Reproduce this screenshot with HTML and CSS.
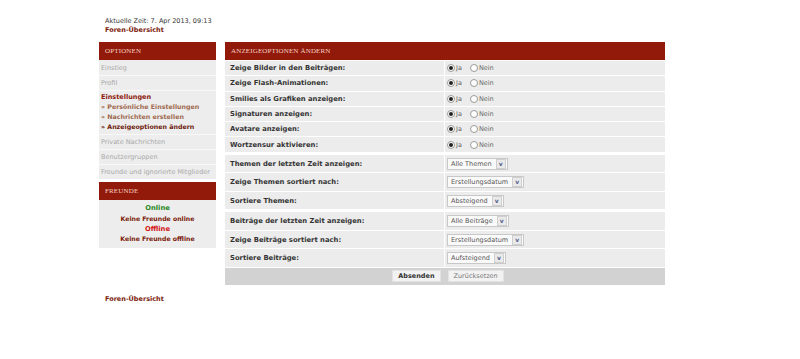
FILE: index.html
```html
<!DOCTYPE html>
<html lang="de">
<head>
<meta charset="utf-8">
<title>Anzeigeoptionen ändern</title>
<link rel="stylesheet" href="styles.css">
</head>
<body>
<div class="page">
  <div class="topinfo">
    <div class="time">Aktuelle Zeit: 7. Apr 2013, 09:13</div>
    <a class="crumb" href="#">Foren-Übersicht</a>
  </div>

  <div class="layout">
    <aside class="sidebar">
      <div class="panel">
        <div class="phead">Optionen</div>
        <ul class="menu">
          <li><a class="off" href="#">Einstieg</a></li>
          <li><a class="off" href="#">Profil</a></li>
          <li class="group">
            <a class="cur" href="#">Einstellungen</a>
            <a class="sub" href="#">» Persönliche Einstellungen</a>
            <a class="sub" href="#">» Nachrichten erstellen</a>
            <a class="sub act" href="#">» Anzeigeoptionen ändern</a>
          </li>
          <li><a class="off" href="#">Private Nachrichten</a></li>
          <li><a class="off" href="#">Benutzergruppen</a></li>
          <li><a class="off" href="#">Freunde und ignorierte Mitglieder</a></li>
        </ul>
      </div>
      <div class="panel friends">
        <div class="phead">Freunde</div>
        <div class="fbody">
          <div class="on">Online</div>
          <div class="none">Keine Freunde online</div>
          <div class="offl">Offline</div>
          <div class="none">Keine Freunde offline</div>
        </div>
      </div>
    </aside>

    <main class="main">
      <div class="phead">Anzeigeoptionen ändern</div>
      <form class="opts">
        <div class="grp">
          <div class="row"><span class="lab">Zeige Bilder in den Beiträgen:</span><span class="val"><label><input type="radio" name="a" checked>Ja</label><label><input type="radio" name="a">Nein</label></span></div>
          <div class="row"><span class="lab">Zeige Flash-Animationen:</span><span class="val"><label><input type="radio" name="b" checked>Ja</label><label><input type="radio" name="b">Nein</label></span></div>
          <div class="row"><span class="lab">Smilies als Grafiken anzeigen:</span><span class="val"><label><input type="radio" name="c" checked>Ja</label><label><input type="radio" name="c">Nein</label></span></div>
          <div class="row"><span class="lab">Signaturen anzeigen:</span><span class="val"><label><input type="radio" name="d" checked>Ja</label><label><input type="radio" name="d">Nein</label></span></div>
          <div class="row"><span class="lab">Avatare anzeigen:</span><span class="val"><label><input type="radio" name="e" checked>Ja</label><label><input type="radio" name="e">Nein</label></span></div>
          <div class="row"><span class="lab">Wortzensur aktivieren:</span><span class="val"><label><input type="radio" name="f" checked>Ja</label><label><input type="radio" name="f">Nein</label></span></div>
        </div>
        <div class="grp sel">
          <div class="row"><span class="lab">Themen der letzten Zeit anzeigen:</span><span class="val"><span class="select"><span class="stext">Alle Themen</span><span class="arrow">v</span></span></span></div>
          <div class="row"><span class="lab">Zeige Themen sortiert nach:</span><span class="val"><span class="select"><span class="stext">Erstellungsdatum</span><span class="arrow">v</span></span></span></div>
          <div class="row"><span class="lab">Sortiere Themen:</span><span class="val"><span class="select"><span class="stext">Absteigend</span><span class="arrow">v</span></span></span></div>
        </div>
        <div class="grp sel">
          <div class="row"><span class="lab">Beiträge der letzten Zeit anzeigen:</span><span class="val"><span class="select"><span class="stext">Alle Beiträge</span><span class="arrow">v</span></span></span></div>
          <div class="row"><span class="lab">Zeige Beiträge sortiert nach:</span><span class="val"><span class="select"><span class="stext">Erstellungsdatum</span><span class="arrow">v</span></span></span></div>
          <div class="row"><span class="lab">Sortiere Beiträge:</span><span class="val"><span class="select"><span class="stext">Aufsteigend</span><span class="arrow">v</span></span></span></div>
        </div>
        <div class="buttons">
          <button type="button" class="btn primary">Absenden</button>
          <button type="button" class="btn">Zurücksetzen</button>
        </div>
      </form>
    </main>
  </div>

  <div class="footer">
    <a class="crumb" href="#">Foren-Übersicht</a>
  </div>
</div>
</body>
</html>
```

FILE: styles.css
```css
* { box-sizing: border-box; }
html, body { margin: 0; padding: 0; background: #fff; }
body {
  font-family: "DejaVu Sans", Verdana, sans-serif;
  font-size: 6.5px;
  color: #333;
}
a { text-decoration: none; }

.page {
  width: 566px;
  margin-left: 99px;
  padding-top: 17px;
}

.topinfo {
  padding-left: 6px;
  line-height: 9px;
  color: #333;
}
.crumb {
  color: #7a1a0a;
  font-weight: bold;
  display: block;
}

.layout {
  display: flex;
  gap: 9px;
  margin-top: 7px;
  align-items: flex-start;
}

.sidebar {
  width: 117px;
  display: flex;
  flex-direction: column;
  gap: 3px;
}

.panel { background: #ededed; }

.phead {
  background: #921a0b;
  color: #f6cfc0;
  font-family: "Liberation Serif", "Times New Roman", serif;
  font-size: 7px;
  text-transform: uppercase;
  height: 18px;
  line-height: 18px;
  padding-left: 6px;
  letter-spacing: 0.15px;
}

.menu {
  list-style: none;
  margin: 0;
  padding: 0;
  padding-top: 1px;
}
.menu li {
  border-top: 1px solid #f8f8f8;
  padding: 0 2px;
  line-height: 14px;
  white-space: nowrap;
}
.menu li:first-child { border-top: none; }
.menu a { display: block; }
.menu .off { color: #a8a8a8; }
.menu .group { padding-top: 1px; padding-bottom: 2px; line-height: 10px; }
.menu .cur { color: #8c1a0c; font-weight: bold; }
.menu .sub { color: #a06a50; font-weight: bold; font-size: 6.3px; }
.menu .act { color: #6e1a0c; }

.fbody {
  text-align: center;
  font-weight: bold;
  padding: 3px 0 4px;
  line-height: 10.5px;
}
.fbody .on { color: #2c8a1e; font-size: 6.8px; }
.fbody .offl { color: #d41616; font-size: 6.8px; }
.fbody .none { color: #7a1a0a; line-height: 10px; font-size: 6.2px; }

.main {
  width: 440px;
}

.opts {
  display: flex;
  flex-direction: column;
  gap: 3px;
  padding-top: 1px;
}
.grp {
  display: flex;
  flex-direction: column;
  gap: 1px;
}
.row {
  display: flex;
  gap: 1px;
  height: 14.3px;
}
.grp.sel .row { height: 17.5px; }
.lab {
  width: 219px;
  background: #ececec;
  font-weight: bold;
  font-size: 6.8px;
  color: #353535;
  padding-left: 5px;
  display: flex;
  align-items: center;
}
.val {
  flex: 1;
  background: #ececec;
  display: flex;
  align-items: center;
  padding-left: 2px;
  color: #666;
}

.val label {
  display: inline-flex;
  align-items: center;
  margin-right: 8px;
}
.val input[type="radio"] {
  appearance: none;
  -webkit-appearance: none;
  width: 8px;
  height: 8px;
  margin: 0 1px 0 0;
  border: 1px solid #9a9a9a;
  border-radius: 50%;
  background: #fff;
  position: relative;
}
.val input[type="radio"]:checked::after {
  content: "";
  position: absolute;
  left: 1px;
  top: 1px;
  width: 4px;
  height: 4px;
  border-radius: 50%;
  background: #222;
}

.select {
  display: inline-flex;
  align-items: center;
  height: 12px;
  border: 1px solid #c8c8c8;
  background: #fafafa;
  color: #555;
}
.stext { padding: 0 4px 0 3px; }
.arrow {
  width: 10px;
  height: 10px;
  margin-right: 1px;
  border: 1px solid #cfcfcf;
  background: #eaeaea;
  color: #55608a;
  font-size: 6px;
  line-height: 8px;
  text-align: center;
  font-weight: bold;
}

.buttons {
  background: #d2d2d2;
  height: 17px;
  display: flex;
  justify-content: center;
  align-items: center;
  gap: 7px;
  padding-left: 6px;
  margin-top: -2px;
}
.btn {
  font-family: "DejaVu Sans", Verdana, sans-serif;
  font-size: 6.5px;
  height: 12px;
  padding: 0 5px;
  border: 1px solid #e2e2e2;
  background: #f2f2f2;
  color: #777;
}
.btn.primary { font-weight: bold; color: #333; }

.footer {
  padding-left: 6px;
  margin-top: 10px;
}
```
